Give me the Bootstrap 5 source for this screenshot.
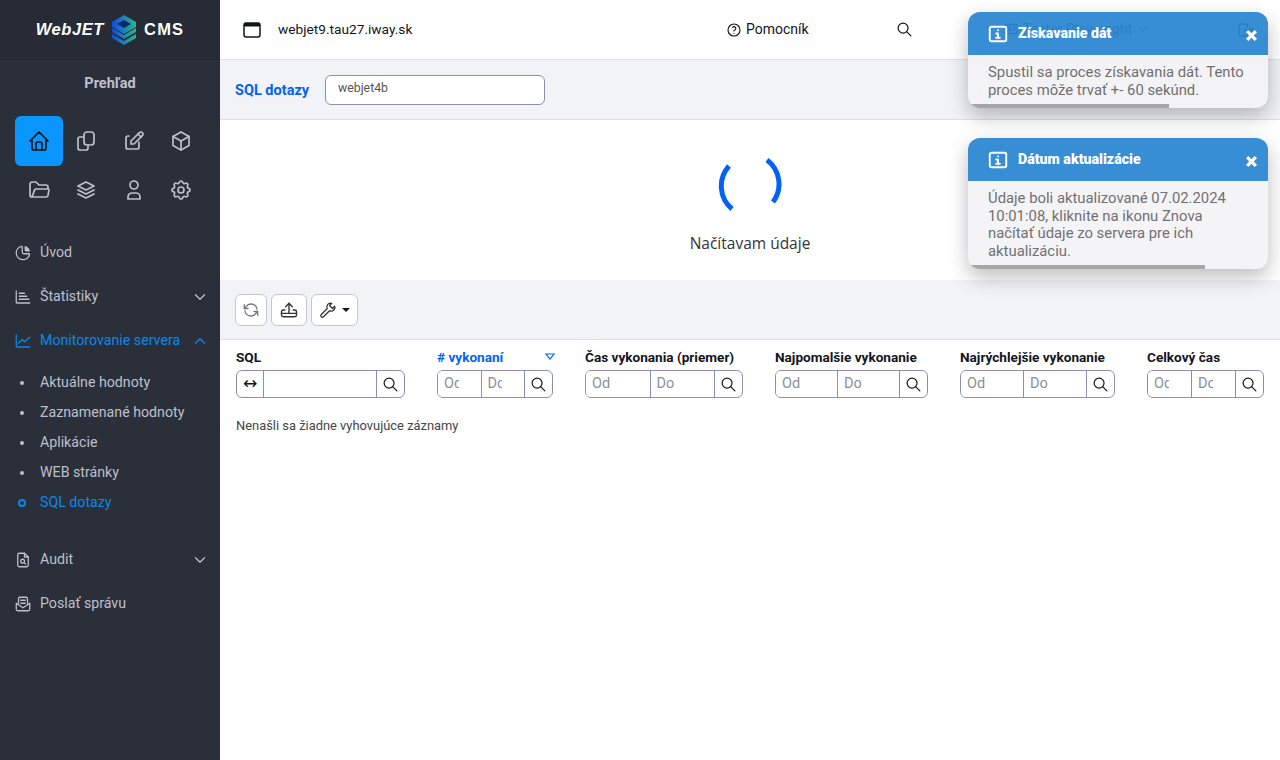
<!DOCTYPE html>
<html lang="sk">
<head>
  <title>SQL dotazy - WebJET CMS</title>
  <meta charset="utf-8">
  <meta name="viewport" content="width=device-width, initial-scale=1">
  <link href="https://cdn.jsdelivr.net/npm/bootstrap@5.3.1/dist/css/bootstrap.min.css" rel="stylesheet">
  <style>
    body { font-family: Roboto, "Liberation Sans", sans-serif; font-size: 14.2px; color: #13151b; height: 760px; overflow: hidden; }
    svg.ico { fill: none; stroke: currentColor; stroke-width: 1.7; stroke-linecap: round; stroke-linejoin: round; flex: none; }

    /* Sidebar */
    .side-wrap { width: 220px; height: 760px; background: #2b2f3a; color: #bcc0cc; flex: none; }
    .side-logo { height: 60px; background: #272b35; border-bottom: 1px solid #252831; gap: 7px; }
    .logo-txt { color: #fff; font-weight: 900; font-style: italic; font-size: 16.5px; letter-spacing: .6px; font-family: "Liberation Sans", sans-serif; }
    .logo-cms { font-style: normal; letter-spacing: 1.2px; }
    .side-title { font-weight: 700; font-size: 14.5px; text-align: center; padding-top: 13px; height: 56px; color: #bcc0cc; }
    .side-icons { display: grid; grid-template-columns: repeat(4, 47.5px); grid-template-rows: 50px 48px; padding-left: 15px; margin-bottom: 17px; }
    .side-ico { border-radius: 6px; display: flex; align-items: center; justify-content: center; color: #bcc0cc; }
    .side-ico.on { background: #0a96ff; color: #13151b; width: 48px; }
    .side-link { height: 44px; padding: 0 11px 0 14px; gap: 8px; color: #bcc0cc; white-space: nowrap; }
    .side-link.on, .sub-link.on { color: #0a87e8; }
    .sub-menu { padding: 5px 0 20px; }
    .sub-link { height: 30px; padding-left: 40px; position: relative; display: flex; align-items: center; color: #bcc0cc; }
    .sub-link::before { content: ""; position: absolute; left: 20px; top: 13px; width: 4px; height: 4px; border-radius: 50%; background: #bcc0cc; }
    .sub-link.on::before { left: 18px; top: 11px; width: 8px; height: 8px; background: none; border: 2px solid #0a87e8; }

    /* Header */
    .top-bar { height: 60px; border-bottom: 1px solid #dddfe5; padding-left: 23px; }
    .top-host { margin-left: 17px; width: 448px; font-size: 13.7px; }
    .top-help { width: 170px; gap: 4px; font-size: 14px; }
    .top-user { margin-left: 90px; gap: 4px; }
    .top-out { margin-left: auto; margin-right: 25px; }
    .gray-bar { background: #f2f3f6; border-bottom: 1px solid #dddfe5; height: 60px; padding: 0 15px; }
    .sql-title { color: #0063f5; font-weight: 700; font-size: 14.5px; width: 90px; padding-top: 2px; }
    .domain-box { width: 220px; height: 30px; border: 1px solid #8a90ad; border-radius: 6px; background: #fff; font-size: 12.3px; color: #555; padding: 4px 12px; line-height: 16px; }
    .load-box { height: 160px; padding-top: 37px; }
    .load-txt { font-family: "Open Sans", sans-serif; font-size: 15.5px; color: #333; margin-top: 11px; }
    .tool-btn { height: 32px; background: #fff; border: 1px solid #c3c6d4; border-radius: 6px; display: flex; align-items: center; justify-content: center; gap: 5px; color: #333; }
    .btn-w1 { width: 32px; } .btn-w2 { width: 36px; } .btn-w3 { width: 47px; }
    .caret-dn { width: 0; height: 0; border: 4px solid transparent; border-top-color: #13151b; border-bottom: 0; }

    /* Table */
    .col-sql { width: 169px; } .col-runs { width: 116px; } .col-avg { width: 158px; }
    .col-slow { width: 153px; } .col-fast { width: 155px; } .col-total { width: 117px; }
    .head-txt { font-weight: 700; font-size: 13.6px; line-height: 19px; height: 22px; white-space: nowrap; }
    .head-txt.sorted { color: #0063f5; }
    .filter-box { height: 28px; border: 1px solid #8a90ad; border-radius: 6px; display: flex; overflow: hidden; }
    .filter-box > input { flex: 1 1 0; min-width: 0; width: 100%; border: 0; border-right: 1px solid #8a90ad; outline: 0; padding: 0 22px 0 6px; font-size: 14.5px; background: #fff; }
    .filter-box > input::placeholder { color: #8b8f9b; opacity: 1; }
    .fsearch { flex: 0 0 27px; display: flex; align-items: center; justify-content: center; color: #13151b; }
    .fsw { flex: 0 0 27px; border-right: 1px solid #8a90ad; display: flex; align-items: center; justify-content: center; color: #13151b; font-family: "DejaVu Sans", sans-serif; font-size: 17px; }
    .sort-ico { fill: none; stroke: #0063f5; stroke-width: 1.1; margin-top: 5px; margin-right: -2px; }
    .empty-txt { font-size: 12.9px; color: #444; margin-top: 18px; padding-left: 16px; }

    /* Toasts */
    .toast-stack { position: absolute; top: 12px; right: 12px; width: 300px; display: flex; flex-direction: column; gap: 30px; }
    .toast-card { background: #f4f4f7; border-radius: 12px; box-shadow: 0 8px 20px rgba(0,0,0,.28); overflow: hidden; color: #666; position: relative; font-size: 14.85px; opacity: .93; }
    .toast-head { height: 43px; background: #2a86d2; color: #fff; font-weight: 900; font-size: 14.2px; display: flex; align-items: center; padding: 0 10px 0 19px; gap: 9px; }
    .toast-head svg.info-ico { stroke-width: 2.1; }
    .toast-x { margin-left: auto; margin-top: 3px; stroke: #fff; stroke-width: 3; fill: none; }
    .toast-body-txt { padding: 9px 22px 5px 20px; line-height: 17.5px; }
    .toast-prog { height: 4px; background: #a0a0a0; }
  </style>
</head>
<body>

<svg class="d-none" xmlns="http://www.w3.org/2000/svg">
  <symbol id="i-home" viewBox="0 0 24 24"><path d="M5 12l-2 0l9 -9l9 9l-2 0"/><path d="M5 12v7a2 2 0 0 0 2 2h10a2 2 0 0 0 2 -2v-7"/><path d="M9 21v-6a2 2 0 0 1 2 -2h2a2 2 0 0 1 2 2v6"/></symbol>
  <symbol id="i-copy" viewBox="0 0 24 24"><path d="M9 8h-3a2 2 0 0 0 -2 2v9a2 2 0 0 0 2 2h6a2 2 0 0 0 2 -2v-3"/><rect x="10" y="3" width="10" height="13" rx="3"/></symbol>
  <symbol id="i-edit" viewBox="0 0 24 24"><path d="M7 7h-1a2 2 0 0 0 -2 2v9a2 2 0 0 0 2 2h9a2 2 0 0 0 2 -2v-5"/><path d="M20.385 6.585a2.1 2.1 0 0 0 -2.97 -2.97l-8.415 8.385v3h3l8.385 -8.415z"/><path d="M16 5l3 3"/></symbol>
  <symbol id="i-box" viewBox="0 0 24 24"><path d="M12 3l8 4.500l0 9l-8 4.500l-8 -4.500l0 -9l8 -4.500"/><path d="M12 12l8 -4.500"/><path d="M12 12l0 9"/><path d="M12 12l-8 -4.500"/></symbol>
  <symbol id="i-folder" viewBox="0 0 24 24"><path d="M5 19l2.757 -7.351a1 1 0 0 1 .936 -.649h12.307a1 1 0 0 1 .986 1.164l-.996 5.211a2 2 0 0 1 -1.964 1.625h-14.026a2 2 0 0 1 -2 -2v-11a2 2 0 0 1 2 -2h4l3 3h7a2 2 0 0 1 2 2v2"/></symbol>
  <symbol id="i-stack" viewBox="0 0 24 24"><path d="M12 4l-8 4l8 4l8 -4l-8 -4"/><path d="M4 12l8 4l8 -4"/><path d="M4 16l8 4l8 -4"/></symbol>
  <symbol id="i-user" viewBox="0 0 24 24"><path d="M8 7a4 4 0 1 0 8 0a4 4 0 0 0 -8 0"/><path d="M6 21h12v-2a4 4 0 0 0 -4 -4h-4a4 4 0 0 0 -4 4z"/></symbol>
  <symbol id="i-gear" viewBox="0 0 24 24"><path d="M10.325 4.317c.426 -1.756 2.924 -1.756 3.35 0a1.724 1.724 0 0 0 2.573 1.066c1.543 -.94 3.31 .826 2.37 2.37a1.724 1.724 0 0 0 1.065 2.572c1.756 .426 1.756 2.924 0 3.35a1.724 1.724 0 0 0 -1.066 2.573c.94 1.543 -.826 3.31 -2.37 2.37a1.724 1.724 0 0 0 -2.572 1.065c-.426 1.756 -2.924 1.756 -3.35 0a1.724 1.724 0 0 0 -2.573 -1.066c-1.543 .94 -3.31 -.826 -2.37 -2.37a1.724 1.724 0 0 0 -1.065 -2.572c-1.756 -.426 -1.756 -2.924 0 -3.35a1.724 1.724 0 0 0 1.066 -2.573c-.94 -1.543 .826 -3.31 2.37 -2.37c1 .608 2.296 .07 2.572 -1.065z"/><path d="M9 12a3 3 0 1 0 6 0a3 3 0 0 0 -6 0"/></symbol>
  <symbol id="i-pie" viewBox="0 0 24 24"><path d="M10 3.200a9 9 0 1 0 10.800 10.800a1 1 0 0 0 -1 -1h-6.800a2 2 0 0 1 -2 -2v-7a.9 .9 0 0 0 -1 -.8"/><path d="M15 3.500a9 9 0 0 1 5.500 5.500h-4.500a1 1 0 0 1 -1 -1v-4.500" fill="currentColor"/></symbol>
  <symbol id="i-bars" viewBox="0 0 24 24"><path d="M3 4v15a1 1 0 0 0 1 1h17"/><path d="M7 7h7"/><path d="M7 11h10"/><path d="M7 15h13"/></symbol>
  <symbol id="i-line" viewBox="0 0 24 24"><path d="M3 4v15a1 1 0 0 0 1 1h17"/><path d="M6 15l5 -5l3 3l7 -6"/></symbol>
  <symbol id="i-audit" viewBox="0 0 24 24"><path d="M14 3h-7a2 2 0 0 0 -2 2v14a2 2 0 0 0 2 2h10a2 2 0 0 0 2 -2v-11z"/><path d="M14 3v5h5"/><circle cx="11.500" cy="13.500" r="2.500"/><path d="M13.500 15.500l2 2"/></symbol>
  <symbol id="i-mail" viewBox="0 0 24 24"><path d="M6 11v-6a2 2 0 0 1 2 -2h8a2 2 0 0 1 2 2v6"/><path d="M9 7h6"/><path d="M9 11h6"/><path d="M3 11v8a2 2 0 0 0 2 2h14a2 2 0 0 0 2 -2v-8l-9 6z"/></symbol>
  <symbol id="i-down" viewBox="0 0 24 24"><path d="M6 9l6 6l6 -6"/></symbol>
  <symbol id="i-up" viewBox="0 0 24 24"><path d="M6 15l6 -6l6 6"/></symbol>
  <symbol id="i-search" viewBox="0 0 24 24"><path d="M3 10a7 7 0 1 0 14 0a7 7 0 1 0 -14 0"/><path d="M21 21l-6 -6"/></symbol>
  <symbol id="i-help" viewBox="0 0 24 24"><path d="M12 12m-9 0a9 9 0 1 0 18 0a9 9 0 1 0 -18 0"/><path d="M12 17v.01"/><path d="M12 13.500a1.500 1.500 0 0 1 1 -1.500a2.600 2.600 0 1 0 -3 -4"/></symbol>
  <symbol id="i-refresh" viewBox="0 0 24 24"><path d="M20 11a8 8 0 0 0 -14.500 -3.500l-2 2.500"/><path d="M3 5v5h5"/><path d="M4 13a8 8 0 0 0 14.500 3.500l2 -2.500"/><path d="M21 19v-5h-5"/></symbol>
  <symbol id="i-upload" viewBox="0 0 24 24"><path d="M12 15v-11"/><path d="M8 8l4 -4l4 4"/><path d="M7 12h-2a2 2 0 0 0 -2 2v4a2 2 0 0 0 2 2h14a2 2 0 0 0 2 -2v-4a2 2 0 0 0 -2 -2h-2"/><path d="M3 16h18"/></symbol>
  <symbol id="i-tool" viewBox="0 0 24 24"><path d="M14 6l4 4l3 -3a5 5 0 0 1 -7 6l-8 8a2 2 0 0 1 -3 -3l8 -8a5 5 0 0 1 6 -7z"/></symbol>
  <symbol id="i-info" viewBox="0 0 24 24"><rect x="3" y="4" width="18" height="16" rx="2"/><path d="M12 8v.01"/><path d="M10 11.500h2v4.500"/><path d="M10 16h4"/></symbol>
  <symbol id="i-user-card" viewBox="0 0 24 24"><rect x="3" y="5" width="18" height="14" rx="2"/><circle cx="9" cy="10" r="2"/><path d="M6 16a3 3 0 0 1 6 0"/><path d="M15 9h3"/><path d="M15 13h3"/></symbol>
  <symbol id="i-logout" viewBox="0 0 24 24"><path d="M14 8v-2a2 2 0 0 0 -2 -2h-7a2 2 0 0 0 -2 2v12a2 2 0 0 0 2 2h7a2 2 0 0 0 2 -2v-2"/><path d="M9 12h12l-3 -3"/><path d="M18 15l3 -3"/></symbol>
  <symbol id="i-x" viewBox="0 0 12 12"><path d="M2 2l8 8M10 2l-8 8"/></symbol>
</svg>

<div class="d-flex">
  <!-- sidebar -->
  <div class="side-wrap">
    <div class="side-logo d-flex align-items-center justify-content-center">
      <span class="logo-txt">WebJET</span>
      <svg width="26" height="30" viewBox="0 0 26 30">
        <defs><linearGradient id="logoGrad" x1="0" y1="0" x2="1" y2="0"><stop offset="0" stop-color="#0b4fe0"/><stop offset="1" stop-color="#2fb58a"/></linearGradient></defs>
        <path d="M13 0l12 7v5l-12 7l-12 -7v-5z" fill="url(#logoGrad)"/>
        <path d="M13 5l7 4l-7 4l-7 -4z" fill="#0c2a6b"/>
        <path d="M1 13l12 7l12 -7v4l-12 7l-12 -7z" fill="url(#logoGrad)"/>
        <path d="M1 19l12 7l12 -7v4l-12 7l-12 -7z" fill="url(#logoGrad)"/>
      </svg>
      <span class="logo-txt logo-cms">CMS</span>
    </div>
    <div class="side-title">Prehľad</div>
    <div class="side-icons">
      <a class="side-ico on"><svg class="ico" width="24" height="24"><use href="#i-home"/></svg></a>
      <a class="side-ico"><svg class="ico" width="24" height="24"><use href="#i-copy"/></svg></a>
      <a class="side-ico"><svg class="ico" width="24" height="24"><use href="#i-edit"/></svg></a>
      <a class="side-ico"><svg class="ico" width="24" height="24"><use href="#i-box"/></svg></a>
      <a class="side-ico"><svg class="ico" width="24" height="24"><use href="#i-folder"/></svg></a>
      <a class="side-ico"><svg class="ico" width="24" height="24"><use href="#i-stack"/></svg></a>
      <a class="side-ico"><svg class="ico" width="24" height="24"><use href="#i-user"/></svg></a>
      <a class="side-ico"><svg class="ico" width="24" height="24"><use href="#i-gear"/></svg></a>
    </div>
    <div class="side-link d-flex align-items-center"><svg class="ico" width="18" height="18"><use href="#i-pie"/></svg>Úvod</div>
    <div class="side-link d-flex align-items-center"><svg class="ico" width="18" height="18"><use href="#i-bars"/></svg>Štatistiky<svg class="ico ms-auto" width="18" height="18"><use href="#i-down"/></svg></div>
    <div class="side-link on d-flex align-items-center"><svg class="ico" width="18" height="18"><use href="#i-line"/></svg>Monitorovanie servera<svg class="ico ms-auto" width="18" height="18"><use href="#i-up"/></svg></div>
    <div class="sub-menu">
      <div class="sub-link">Aktuálne hodnoty</div>
      <div class="sub-link">Zaznamenané hodnoty</div>
      <div class="sub-link">Aplikácie</div>
      <div class="sub-link">WEB stránky</div>
      <div class="sub-link on">SQL dotazy</div>
    </div>
    <div class="side-link d-flex align-items-center"><svg class="ico" width="18" height="18"><use href="#i-audit"/></svg>Audit<svg class="ico ms-auto" width="18" height="18"><use href="#i-down"/></svg></div>
    <div class="side-link d-flex align-items-center"><svg class="ico" width="18" height="18"><use href="#i-mail"/></svg>Poslať správu</div>
  </div>

  <!-- main -->
  <div class="flex-grow-1">
    <div class="top-bar d-flex align-items-center">
      <svg width="18" height="18" viewBox="0 0 18 18"><rect x="1" y="2" width="16" height="14" rx="2" fill="#fff" stroke="#13151b" stroke-width="1.500"/><path d="M1 3.500a1.500 1.500 0 0 1 1.500 -1.500h13a1.500 1.500 0 0 1 1.500 1.500v2h-16z" fill="#13151b"/></svg>
      <span class="top-host">webjet9.tau27.iway.sk</span>
      <span class="top-help d-flex align-items-center"><svg class="ico" width="16" height="16"><use href="#i-help"/></svg>Pomocník</span>
      <svg class="ico" width="17" height="17"><use href="#i-search"/></svg>
      <span class="top-user d-flex align-items-center"><svg class="ico" width="16" height="16"><use href="#i-user-card"/></svg>Tester Playwright<svg class="ico" width="14" height="14"><use href="#i-down"/></svg></span>
      <svg class="ico top-out" width="18" height="18"><use href="#i-logout"/></svg>
    </div>
    <div class="gray-bar d-flex align-items-center">
      <span class="sql-title">SQL dotazy</span>
      <div class="domain-box">webjet4b</div>
    </div>
    <div class="load-box text-center">
      <svg width="64" height="64" viewBox="0 0 64 64" fill="none" stroke="#0063f5" stroke-width="5"><path d="M11 9a30 30 0 0 0 3 43"/><path d="M49 3a30 30 0 0 1 6 42"/></svg>
      <div class="load-txt">Načítavam údaje</div>
    </div>
    <div class="gray-bar d-flex align-items-center gap-1">
      <div class="tool-btn btn-w1"><svg class="ico text-secondary" width="18" height="18"><use href="#i-refresh"/></svg></div>
      <div class="tool-btn btn-w2"><svg class="ico" width="20" height="20"><use href="#i-upload"/></svg></div>
      <div class="tool-btn btn-w3"><svg class="ico" width="18" height="18"><use href="#i-tool"/></svg><span class="caret-dn"></span></div>
    </div>
    <div class="d-flex gap-2 ps-3 pt-2">
      <div class="col-sql me-4">
        <div class="head-txt">SQL</div>
        <div class="filter-box"><div class="fsw">↔</div><input type="text" aria-label="SQL"><div class="fsearch"><svg class="ico" width="17" height="17"><use href="#i-search"/></svg></div></div>
      </div>
      <div class="col-runs me-4">
        <div class="head-txt sorted d-flex justify-content-between">#&nbsp;vykonaní<svg class="sort-ico" width="10" height="8" viewBox="0 0 10 8"><path d="M1 1h8l-4 5z"/></svg></div>
        <div class="filter-box"><input type="text" placeholder="Od"><input type="text" placeholder="Do"><div class="fsearch"><svg class="ico" width="17" height="17"><use href="#i-search"/></svg></div></div>
      </div>
      <div class="col-avg me-4">
        <div class="head-txt">Čas vykonania (priemer)</div>
        <div class="filter-box"><input type="text" placeholder="Od"><input type="text" placeholder="Do"><div class="fsearch"><svg class="ico" width="17" height="17"><use href="#i-search"/></svg></div></div>
      </div>
      <div class="col-slow me-4">
        <div class="head-txt">Najpomalšie vykonanie</div>
        <div class="filter-box"><input type="text" placeholder="Od"><input type="text" placeholder="Do"><div class="fsearch"><svg class="ico" width="17" height="17"><use href="#i-search"/></svg></div></div>
      </div>
      <div class="col-fast me-4">
        <div class="head-txt">Najrýchlejšie vykonanie</div>
        <div class="filter-box"><input type="text" placeholder="Od"><input type="text" placeholder="Do"><div class="fsearch"><svg class="ico" width="17" height="17"><use href="#i-search"/></svg></div></div>
      </div>
      <div class="col-total">
        <div class="head-txt">Celkový čas</div>
        <div class="filter-box"><input type="text" placeholder="Od"><input type="text" placeholder="Do"><div class="fsearch"><svg class="ico" width="17" height="17"><use href="#i-search"/></svg></div></div>
      </div>
    </div>
    <div class="empty-txt">Nenašli sa žiadne vyhovujúce záznamy</div>
  </div>
</div>

<div class="toast-stack">
  <div class="toast-card">
    <div class="toast-head"><svg class="ico info-ico" width="22" height="22"><use href="#i-info"/></svg>Získavanie dát<svg class="toast-x" width="13" height="13"><use href="#i-x"/></svg></div>
    <div class="toast-body-txt">Spustil sa proces získavania dát. Tento proces môže trvať +- 60 sekúnd.</div>
    <div class="toast-prog" style="width:67%"></div>
  </div>
  <div class="toast-card">
    <div class="toast-head"><svg class="ico info-ico" width="22" height="22"><use href="#i-info"/></svg>Dátum aktualizácie<svg class="toast-x" width="13" height="13"><use href="#i-x"/></svg></div>
    <div class="toast-body-txt">Údaje boli aktualizované 07.02.2024 10:01:08, kliknite na ikonu Znova načítať údaje zo servera pre ich aktualizáciu.</div>
    <div class="toast-prog" style="width:79%"></div>
  </div>
</div>

<script src="https://cdn.jsdelivr.net/npm/bootstrap@5.3.1/dist/js/bootstrap.bundle.min.js"></script>
</body>
</html>
